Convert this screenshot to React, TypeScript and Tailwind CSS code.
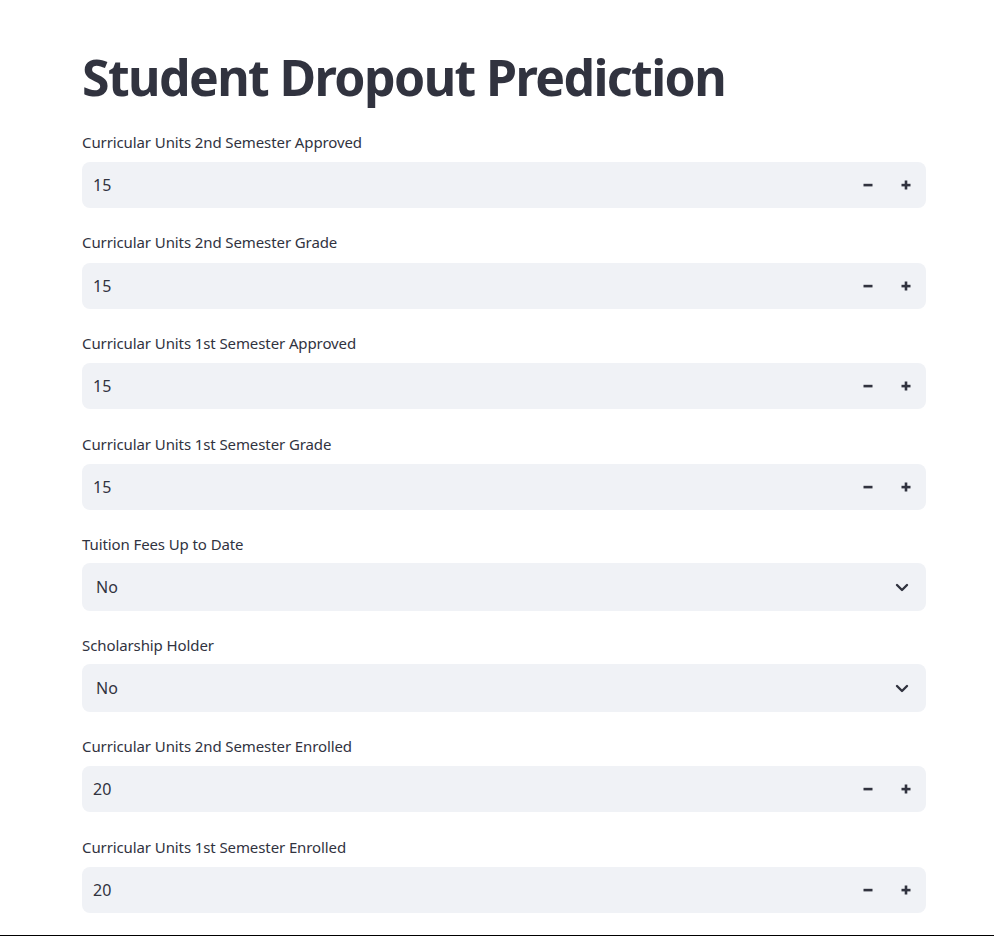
import { ReactNode } from "react";

type Field =
  | { kind: "number"; label: string; value: string }
  | { kind: "select"; label: string; value: string };

const fields: Field[] = [
  { kind: "number", label: "Curricular Units 2nd Semester Approved", value: "15" },
  { kind: "number", label: "Curricular Units 2nd Semester Grade", value: "15" },
  { kind: "number", label: "Curricular Units 1st Semester Approved", value: "15" },
  { kind: "number", label: "Curricular Units 1st Semester Grade", value: "15" },
  { kind: "select", label: "Tuition Fees Up to Date", value: "No" },
  { kind: "select", label: "Scholarship Holder", value: "No" },
  { kind: "number", label: "Curricular Units 2nd Semester Enrolled", value: "20" },
  { kind: "number", label: "Curricular Units 1st Semester Enrolled", value: "20" },
];

function Label({ children, mb }: { children: ReactNode; mb: string }) {
  return (
    <div className={`h-5 flex items-center text-[15px] tracking-[-0.1px] text-[#31333f] ${mb}`}>
      {children}
    </div>
  );
}

function NumberField({ label, value }: { label: string; value: string }) {
  return (
    <div className="mb-[24.6px]">
      <Label mb="mb-[10px]">{label}</Label>
      <div className="h-[46px] rounded-lg bg-[#f0f2f6] flex items-center">
        <span className="flex-1 pl-[11px] text-[16px] text-[#31333f]">{value}</span>
        <button className="w-[38px] h-full flex items-center justify-center">
          <svg width="10" height="10" viewBox="0 0 10 10">
            <rect x="0.5" y="3.8" width="9" height="2.6" fill="#31333f" />
          </svg>
        </button>
        <button className="w-[38px] h-full flex items-center justify-center mr-px">
          <svg width="10" height="10" viewBox="0 0 10 10">
            <rect x="0.5" y="3.8" width="9" height="2.6" fill="#31333f" />
            <rect x="3.7" y="0.5" width="2.6" height="9" fill="#31333f" />
          </svg>
        </button>
      </div>
    </div>
  );
}

function SelectField({ label, value }: { label: string; value: string }) {
  return (
    <div className="mb-[24px]">
      <Label mb="mb-[9px]">{label}</Label>
      <div className="h-[48px] rounded-lg bg-[#f0f2f6] flex items-center pl-[14px] pr-[12px]">
        <span className="flex-1 text-[16px] text-[#31333f]">{value}</span>
        <svg width="24" height="24" viewBox="0 0 24 24" fill="none" stroke="#31333f" strokeWidth="2.4" strokeLinecap="round" strokeLinejoin="round">
          <path d="M7 10l5 5 5-5" />
        </svg>
      </div>
    </div>
  );
}

export default function App() {
  return (
    <div
      className="h-[936px] overflow-hidden bg-white border-b border-black"
      style={{ fontFamily: '"Noto Sans", "Open Sans", sans-serif' }}
    >
      <div className="w-[844px] ml-[82px] pt-[49px]">
        <h1 className="text-[50px] font-bold leading-[56px] text-[#31333f] mb-[27px] tracking-[-1.6px]">
          Student Dropout Prediction
        </h1>
        {fields.map((f, i) =>
          f.kind === "number" ? (
            <NumberField key={i} label={f.label} value={f.value} />
          ) : (
            <SelectField key={i} label={f.label} value={f.value} />
          )
        )}
      </div>
    </div>
  );
}
